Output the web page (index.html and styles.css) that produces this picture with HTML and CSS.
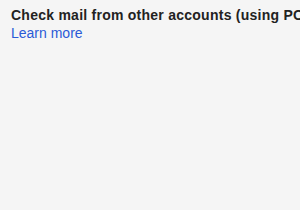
FILE: index.html
```html
<!DOCTYPE html>
<html>
<head>
<meta charset="utf-8">
<link rel="stylesheet" href="styles.css">
</head>
<body>
<div class="panel">
  <div class="title">Check mail from other accounts (using POP3):</div>
  <a class="learn" href="#">Learn more</a>
</div>
</body>
</html>
```
FILE: styles.css
```css
html, body {
  margin: 0;
  padding: 0;
  background: #f5f5f5;
  overflow: hidden;
}
.panel {
  padding: 6px 0 0 11px;
  font-family: "Liberation Sans", Arial, sans-serif;
  font-size: 14px;
  white-space: nowrap;
  overflow: hidden;
}
.title {
  font-weight: bold;
  color: #222;
  line-height: 18px;
  letter-spacing: 0.25px;
}
.learn {
  display: block;
  color: #2a5bd7;
  text-decoration: none;
  line-height: 18px;
}
```
